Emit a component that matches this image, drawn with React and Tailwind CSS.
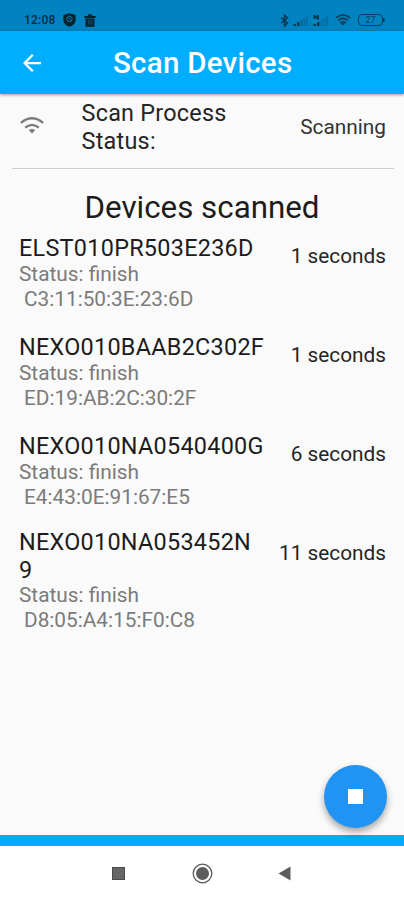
import React from "react";

const devices = [
  { name: ["ELST010PR503E236D"], mac: "C3:11:50:3E:23:6D", time: "1 seconds" },
  { name: ["NEXO010BAAB2C302F"], mac: "ED:19:AB:2C:30:2F", time: "1 seconds" },
  { name: ["NEXO010NA0540400G"], mac: "E4:43:0E:91:67:E5", time: "6 seconds" },
  { name: ["NEXO010NA053452N", "9"], mac: "D8:05:A4:15:F0:C8", time: "11 seconds" },
];

function Signal({ alert }) {
  return (
    <svg width="16" height="13" viewBox="0 0 16 13" fill="#06384f">
      <rect x="0.5" y="10" width="2.4" height="2" />
      <rect x="4" y="8" width="2.4" height="4" />
      <rect x="7.5" y="6" width="2" height="6" opacity={alert ? 0.25 : 0.4} />
      <rect x="10.3" y="4" width="2" height="8" opacity="0.25" />
      <rect x="13.1" y="2" width="2" height="10" opacity="0.25" />
      {alert && <path d="M0.5 1h1.6l1.2 1.5L4.5 1H6v5H4.4V4L3.3 5 2 4v1H.5z" />}
    </svg>
  );
}

function StatusBar() {
  return (
    <div className="flex h-[31px] items-center bg-[#0083c0] pt-[9px] pl-6 text-[#062d40]">
      <span className="w-[32px] text-[12px] leading-[14px] font-medium tracking-[0.2px] whitespace-nowrap">12:08</span>
      <svg className="ml-[7px]" width="13" height="14" viewBox="0 0 13 14">
        <path d="M6.5 0.3 12.6 2v5c0 3.2-2.6 5.6-6.1 6.8C3 12.6 0.4 10.2 0.4 7V2z" fill="#06222f" />
        <circle cx="6.5" cy="6" r="2.7" fill="none" stroke="#0a76a8" />
        <path d="M5 4.5 8.500 8" stroke="#0a76a8" />
      </svg>
      <svg className="ml-[8px]" width="12" height="13" viewBox="0 0 12 13">
        <path d="M0.3 2h3.2l0.8-1.7h3.4L8.5 2h3.2v2H0.3zM1.5 4.500h9V12.800h-9z" fill="#06222f" />
        <path d="M4.4 6v4.6M6.2 6v4.6M8 6v4.6" stroke="#0a6792" strokeWidth="0.7" />
      </svg>
      <div className="ml-auto flex items-center pr-[21px]">
        <svg width="9" height="13" viewBox="0 0 9 13" fill="none" stroke="#06384f" strokeWidth="1.5">
          <path d="M1 3.500 7.500 9 4.500 12V1l3 2.800L1 9.300" />
        </svg>
        <div className="ml-[4px] flex gap-[4px]">
          <Signal />
          <Signal alert />
        </div>
        <svg className="ml-[6px]" width="16" height="12" viewBox="0 0 16 12" fill="none" stroke="#06384f" strokeWidth="1.6">
          <path d="M.8 4Q8-2 15.200 4M3 6.500q5-4.200 10 0M5.200 8.900q2.800-2.300 5.600 0" />
          <path d="M8 11.500 6 9.200h4z" fill="#06384f" stroke="none" />
        </svg>
        <div className="relative ml-[7px] flex h-[12px] w-[25px] items-center justify-center rounded-[4px] border-[1.5px] border-[#06405c] text-[9px] leading-none text-[#06405c]">
          27
          <span className="absolute top-[3px] -right-[3px] h-[4px] w-[2px] rounded-r bg-[#06405c]" />
        </div>
      </div>
    </div>
  );
}

function DeviceRow({ device }) {
  const wrapped = device.name.length > 1;
  return (
    <div className={`flex items-start justify-between pr-[18px] pl-[19px] ${wrapped ? "h-[120px]" : "h-[99px]"}`}>
      <div className={wrapped ? "-mt-[4px]" : "-mt-px"}>
        {device.name.map((line) => (
          <div key={line} className="h-[28px] text-[23.4px] leading-[28px] tracking-[0.28px] whitespace-nowrap text-[#1c1c1c]">
            {line}
          </div>
        ))}
        <div className={`text-[20.8px] leading-[25px] whitespace-nowrap text-[#7b7b7b] ${wrapped ? "-mt-px" : ""}`}>Status: finish</div>
        <div className="pl-[5px] text-[20.8px] leading-[25px] whitespace-nowrap text-[#7b7b7b]">{device.mac}</div>
      </div>
      <div className="mt-[9px] text-[20.8px] leading-[25px] whitespace-nowrap text-[#252525]">{device.time}</div>
    </div>
  );
}

export default function App() {
  return (
    <div className="flex h-[900px] w-[404px] flex-col overflow-hidden bg-[#fafafa] font-[Roboto,sans-serif]">
      <StatusBar />
      <header className="z-10 flex h-[63px] shrink-0 items-center bg-[#00adff] shadow-[0_1px_3px_rgba(0,0,0,0.4)]">
        <svg className="ml-[23px]" width="18" height="18" viewBox="4 4 16 16" fill="#fff">
          <path d="M20 11H7.830l5.590-5.590L12 4l-8 8 8 8 1.410-1.410L7.830 13H20z" />
        </svg>
        <h1 className="mt-px ml-[72px] text-[29.5px] leading-[34px] font-medium tracking-[0.25px] whitespace-nowrap text-white">Scan Devices</h1>
      </header>

      <section className="mr-[10px] ml-3 flex h-[75px] shrink-0 items-start border-b border-[#cfcfcf] pr-[8px]">
        <svg className="mt-[23px] ml-[8px]" width="24" height="17" viewBox="0 0 24 17" fill="none" stroke="#7b7b7b" strokeWidth="2.2">
          <path d="M.8 6Q12-3.500 23.200 6M5.200 10.600q6.800-5.600 13.600 0" />
          <path d="M12 16.500 8.800 13.200q3.200-2.300 6.400 0z" fill="#7b7b7b" stroke="none" />
        </svg>
        <div className="mt-[5px] ml-[37.5px] text-[23.4px] leading-[28px] tracking-[0.25px] whitespace-nowrap text-[#252525]">
          Scan Process
          <br />
          Status:
        </div>
        <div className="mt-[21px] ml-auto text-[20.8px] leading-[25px] whitespace-nowrap text-[#333]">Scanning</div>
      </section>

      <h2 className="mt-[20px] h-[38px] shrink-0 text-center text-[31.3px] leading-[38px] whitespace-nowrap text-[#1c1c1c]">Devices scanned</h2>

      <main className="mt-[8px] flex-1">
        {devices.map((device) => (
          <DeviceRow key={device.mac} device={device} />
        ))}
      </main>

      <div className="relative h-[11px] shrink-0 bg-[#00adff]">
        <button className="absolute -top-[70px] left-[324px] flex size-[63px] items-center justify-center rounded-full bg-[#2194f3] shadow-[0_4px_7px_rgba(0,0,0,0.35)]">
          <span className="size-[15px] bg-white" />
        </button>
      </div>
      <nav className="z-10 flex h-[54px] shrink-0 items-center bg-white">
        <span className="ml-[112px] size-[13px] border border-[#4b4b4b] bg-[#666]" />
        <svg className="ml-[67px]" width="21" height="21" viewBox="0 0 21 21">
          <circle cx="10.5" cy="10.5" r="9.3" fill="none" stroke="#5c5c5c" strokeWidth="1.3" />
          <circle cx="10.5" cy="10.5" r="6.5" fill="#5c5c5c" />
        </svg>
        <svg className="ml-[65px]" width="13" height="15" viewBox="0 0 13 15">
          <path d="M.5 7.500 12.500.5v14z" fill="#5c5c5c" />
        </svg>
      </nav>
    </div>
  );
}
